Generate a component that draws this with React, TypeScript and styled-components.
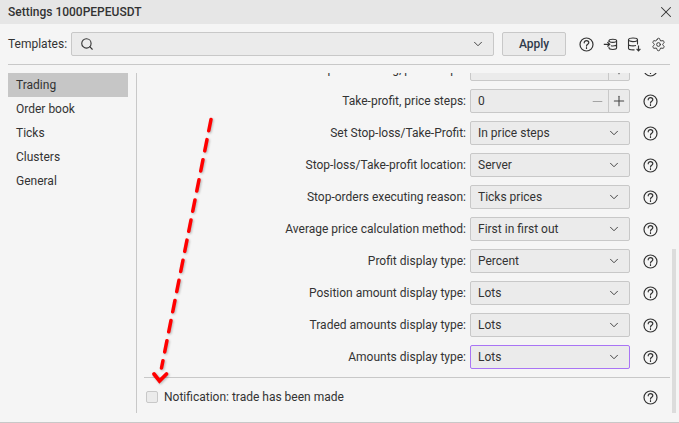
import * as React from 'react'
import styled, { createGlobalStyle } from 'styled-components'
import { ChevronDown, Minus, Plus, Search, Settings, X } from 'lucide-react'

const GlobalStyle = createGlobalStyle`
  html, body {
    margin: 0;
    padding: 0;
    background: #f5f5f5;
  }
  body {
    font-family: Roboto, "Liberation Sans", sans-serif;
    font-size: 12px;
    color: #333;
  }
`

const HelpIcon: React.FC<{ size?: number }> = ({ size = 15 }) => (
  <HelpSvg width={size} height={size} viewBox="0 0 15 15" fill="none" stroke="#333" strokeWidth="1.2">
    <circle cx="7.5" cy="7.5" r="6.5" />
    <path d="M5.2 5.8c0-1.300 1-2.200 2.300-2.200s2.300.9 2.300 2.100c0 1.700-2.300 1.600-2.300 3.400" strokeLinecap="round" />
    <path d="M7.5 10.700v.8" strokeLinecap="round" />
  </HelpSvg>
)

const Stepper: React.FC = () => (
  <StepButtons>
    <Minus size={15} strokeWidth={1.4} color="#999" />
    <Plus size={16} strokeWidth={1.6} color="#444" />
  </StepButtons>
)

const rows = [
  { label: 'Take-profit, price steps:', value: '0', stepper: true },
  { label: 'Set Stop-loss/Take-Profit:', value: 'In price steps' },
  { label: 'Stop-loss/Take-profit location:', value: 'Server' },
  { label: 'Stop-orders executing reason:', value: 'Ticks prices' },
  { label: 'Average price calculation method:', value: 'First in first out' },
  { label: 'Profit display type:', value: 'Percent' },
  { label: 'Position amount display type:', value: 'Lots' },
  { label: 'Traded amounts display type:', value: 'Lots' },
  { label: 'Amounts display type:', value: 'Lots', focused: true },
]

const menu = ['Trading', 'Order book', 'Ticks', 'Clusters', 'General']

const App: React.FC = () => {
  return (
    <Window>
      <GlobalStyle />
      <TitleBar>
        <Title>Settings 1000PEPEUSDT</Title>
        <CloseIcon size={18} strokeWidth={1.4} color="#333" />
      </TitleBar>
      <Toolbar>
        <span>Templates:</span>
        <TemplateField>
          <Search size={14} strokeWidth={1.9} color="#333" />
          <ChevronDown size={14} strokeWidth={1.7} color="#444" />
        </TemplateField>
        <ApplyButton>Apply</ApplyButton>
        <ToolIcons>
          <HelpIcon />
          <svg width="15" height="15" viewBox="0 0 15 15" fill="none" stroke="#333" strokeWidth="1.1">
            <ellipse cx="9.800" cy="3.800" rx="3.800" ry="1.600" />
            <path d="M6 3.800v1M13.600 3.800v7c0 1-1.700 1.700-3.800 1.700S6 11.800 6 10.800v-1M13.600 7.300c0 1-1.700 1.700-3.800 1.700-.8 0-1.400-.1-1.900-.2" />
            <path d="M0.800 7.300h5.900M4.400 5.100l2.300 2.200-2.300 2.200" strokeWidth="1.200" />
          </svg>
          <svg width="15" height="15" viewBox="0 0 15 15" fill="none" stroke="#333" strokeWidth="1.1">
            <ellipse cx="6" cy="2.800" rx="4.500" ry="1.800" />
            <path d="M1.500 2.800v8.400c0 1 2 1.700 4.500 1.700h1.500M10.500 2.800v4.700M1.500 7.200c0 1 2 1.700 4.500 1.700 1 0 2-.1 3-.4" />
            <path d="M11.500 8.500v5.200M9.600 11.900l1.900 1.900 1.900-1.900" strokeWidth="1.200" />
          </svg>
          <Settings size={15} strokeWidth={1.5} color="#333" />
        </ToolIcons>
      </Toolbar>
      <Body>
        <Sidebar>
          {menu.map((item, i) => (
            <MenuItem key={item} $active={i === 0}>
              {item}
            </MenuItem>
          ))}
        </Sidebar>
        <Panel>
          <Scroller>
            <RowList>
              <Row>
                <RowLabel>Stop-loss trailing, price steps:</RowLabel>
                <Field>
                  <span>0</span>
                  <Stepper />
                </Field>
                <HelpIcon />
              </Row>
              {rows.map((row) => (
                <Row key={row.label}>
                  <RowLabel>{row.label}</RowLabel>
                  <Field $focused={row.focused}>
                    <span>{row.value}</span>
                    {row.stepper ? <Stepper /> : <ChevronDown size={14} strokeWidth={1.7} color="#444" />}
                  </Field>
                  <HelpIcon />
                </Row>
              ))}
            </RowList>
          </Scroller>
          <Footer>
            <CheckRow>
              <CheckBox />
              <span>Notification: trade has been made</span>
            </CheckRow>
            <HelpIcon />
          </Footer>
        </Panel>
        <ScrollTrack>
          <ScrollThumb />
        </ScrollTrack>
      </Body>
      <Arrow width="679" height="423" viewBox="0 0 679 423" fill="none" stroke="#f00" strokeLinecap="round">
        <path d="M211 119.500 161.500 368" strokeWidth="3.500" strokeDasharray="11.500 9" />
        <path d="M154 374 159.500 381 166.500 374" strokeWidth="3.800" />
      </Arrow>
    </Window>
  )
}

export default App

const Window = styled.div`
  position: relative;
  width: 679px;
  height: 423px;
  box-sizing: border-box;
  border-bottom: 1px solid #c8c8c8;
  display: flex;
  flex-direction: column;
  overflow: hidden;
`

const TitleBar = styled.header`
  height: 24px;
  flex: none;
  background: #e6e6e6;
  display: flex;
  align-items: center;
  justify-content: space-between;
  padding: 0 0 0 8px;
`

const CloseIcon = styled(X)`
  margin-right: 4px;
`

const Title = styled.div`
  font-size: 12px;
  font-weight: 500;
`

const Toolbar = styled.div`
  height: 41px;
  flex: none;
  margin: 0 9px 0 8px;
  box-sizing: border-box;
  border-bottom: 1px solid #c8c8c8;
  display: flex;
  align-items: center;
  gap: 4px;
`

const TemplateField = styled.div`
  width: 423px;
  height: 24px;
  box-sizing: border-box;
  margin-right: 4px;
  background: #ebebeb;
  border: 1px solid #c8c8c8;
  border-radius: 2px;
  display: flex;
  align-items: center;
  justify-content: space-between;
  padding: 0 8px;
`

const ApplyButton = styled.button`
  width: 64px;
  height: 24px;
  padding: 0;
  background: #ebebeb;
  border: 1px solid #c8c8c8;
  border-radius: 2px;
  font: 500 12px Roboto, sans-serif;
  color: #2f3a4c;
`

const ToolIcons = styled.div`
  display: flex;
  align-items: center;
  gap: 9px;
  margin-left: 9px;
`

const Body = styled.div`
  flex: 1;
  min-height: 0;
  display: flex;
  padding: 8px 3px 9px 8px;
`

const Sidebar = styled.nav`
  width: 120px;
  flex: none;
  margin-right: 8px;
`

const MenuItem = styled.div<{ $active?: boolean }>`
  height: 24px;
  line-height: 24px;
  padding-left: 8px;
  background: ${(p) => (p.$active ? '#c6c6c6' : 'transparent')};
`

const Panel = styled.section`
  width: 534px;
  flex: none;
  box-sizing: border-box;
  border-left: 1px solid #c8c8c8;
  display: flex;
  flex-direction: column;
`

const Scroller = styled.div`
  flex: 1;
  min-height: 0;
  overflow: hidden;
`

const RowList = styled.div`
  margin-top: -16px;
  display: flex;
  flex-direction: column;
  gap: 8px;
`

const Row = styled.div`
  height: 24px;
  display: flex;
  align-items: center;
  justify-content: flex-end;
  padding-right: 12px;
`

const RowLabel = styled.span`
  margin-right: 4px;
`

const Field = styled.div<{ $focused?: boolean }>`
  width: 160px;
  height: 24px;
  box-sizing: border-box;
  margin-right: 13px;
  padding: 0 8px 0 7px;
  display: flex;
  align-items: center;
  justify-content: space-between;
  background: #ebebeb;
  border: 1px solid ${(p) => (p.$focused ? '#a974f5' : '#c8c8c8')};
  border-radius: 2px;
`

const StepButtons = styled.div`
  display: flex;
  align-items: center;
  gap: 3px;
  height: 22px;
  margin-right: -6px;

  svg:last-child {
    box-sizing: content-box;
    border-left: 1px solid #c8c8c8;
    padding: 3px 0 3px 2px;
  }
`

const Footer = styled.div`
  height: 36px;
  flex: none;
  margin-left: 7px;
  border-top: 1px solid #c8c8c8;
  display: flex;
  align-items: center;
  justify-content: space-between;
  padding: 4px 12px 0 2px;
  box-sizing: border-box;
`

const CheckRow = styled.label`
  display: flex;
  align-items: center;
  gap: 6px;
  margin-bottom: 2px;
`

const CheckBox = styled.span`
  width: 12px;
  height: 12px;
  box-sizing: border-box;
  background: #ebebeb;
  border: 1px solid #c8c8c8;
  border-radius: 2px;
`

const HelpSvg = styled.svg`
  flex: none;
`

const ScrollTrack = styled.div`
  width: 4px;
  margin-left: 2px;
  display: flex;
  flex-direction: column;
  justify-content: flex-end;
`

const ScrollThumb = styled.div`
  height: 164px;
  background: #dcdcdc;
`

const Arrow = styled.svg`
  position: absolute;
  left: 0;
  top: 0;
  pointer-events: none;
  filter: drop-shadow(1px 1px 0.8px rgba(0, 0, 0, 0.25));
`
